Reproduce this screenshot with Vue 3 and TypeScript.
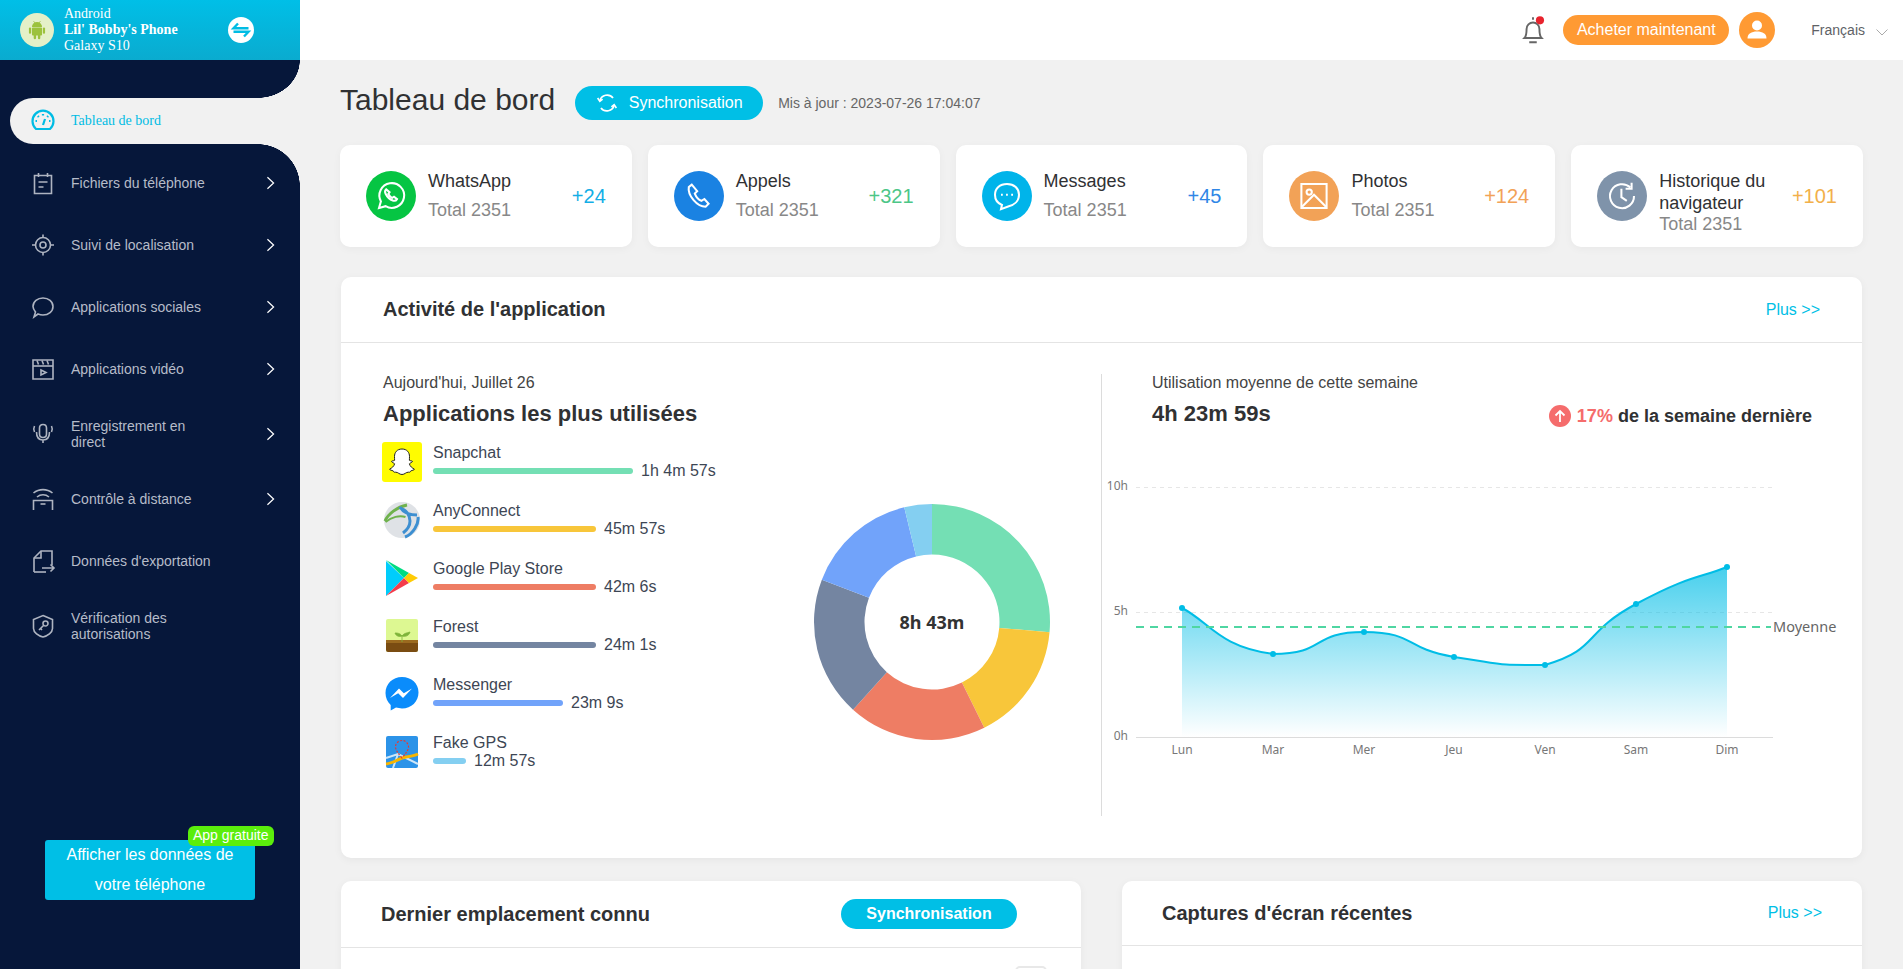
<template>
  <div class="layout">
    <aside class="sidebar">
      <div class="device">
        <span class="device-logo">
          <svg viewBox="0 0 24 24" width="22" height="22" fill="#9cc23c">
            <path d="M6.5 8.6a5.5 5.2 0 0 1 11 0z" />
            <rect x="6.5" y="9.4" width="11" height="8.6" rx="1" />
            <rect x="3.2" y="9.2" width="2.4" height="7" rx="1.2" />
            <rect x="18.4" y="9.2" width="2.4" height="7" rx="1.2" />
            <rect x="8.4" y="16" width="2.6" height="6" rx="1.3" />
            <rect x="13" y="16" width="2.6" height="6" rx="1.3" />
            <path d="M8.2 2.2l1.5 2.2M15.8 2.2l-1.5 2.2" stroke="#9cc23c" stroke-width=".8" />
          </svg>
        </span>
        <div class="device-text">
          <div>Android</div>
          <div class="device-name">Lil' Bobby's Phone</div>
          <div>Galaxy S10</div>
        </div>
        <span class="device-switch">
          <svg viewBox="0 0 26 26" width="26" height="26">
            <circle cx="13" cy="13" r="13" fill="#fff" />
            <path d="M20.5 11.2h-15L10 6.5M5.5 14.8h15L16 19.5" fill="none" stroke="#00bce4" stroke-width="2.4" />
          </svg>
        </span>
      </div>

      <nav class="menu">
        <a
          v-for="item in menu"
          :key="item.label"
          class="menu-item"
          :class="{ active: item.active, tall: item.tall }"
        >
          <span class="menu-icon">
            <svg viewBox="0 0 26 26" width="26" height="26" fill="none" stroke="currentColor" stroke-width="1.6">
              <path v-for="d in item.paths" :key="d" :d="d" />
            </svg>
          </span>
          <span class="menu-label">{{ item.label }}</span>
          <svg v-if="item.arrow" class="menu-arrow" viewBox="0 0 10 16" width="9" height="14" fill="none" stroke="#fff" stroke-width="1.4">
            <path d="M1.5 1.5L8.5 8L1.5 14.5" />
          </svg>
        </a>
      </nav>

      <div class="free-app">
        <span class="free-badge">App gratuite</span>
        Afficher les données de votre téléphone
      </div>
    </aside>

    <div class="page">
      <header class="topbar">
        <svg class="bell" viewBox="0 0 24 28" width="26" height="30" fill="none" stroke="#666" stroke-width="1.8">
          <path d="M12 4.5V2M4 21.5c2-2 2-4 2-8.5a6 6 0 0 1 12 0c0 4.500 0 6.500 2 8.500zM8.500 25.500h7" />
          <circle cx="18.500" cy="5" r="3.800" fill="#e8232d" stroke="none" />
        </svg>
        <button class="buy">Acheter maintenant</button>
        <span class="avatar">
          <svg viewBox="0 0 36 36" width="36" height="36" fill="#fff">
            <circle cx="18" cy="13.500" r="5" />
            <path d="M8.500 26.500c0-5 4-7 9.500-7s9.500 2 9.500 7z" />
          </svg>
        </span>
        <span class="lang">Français</span>
        <svg class="lang-arrow" viewBox="0 0 12 7" width="12" height="7" fill="none" stroke="#aaa" stroke-width="1">
          <path d="M.5.5L6 6l5.500-5.500" />
        </svg>
      </header>

      <main class="content">
        <div class="title-row">
          <h1>Tableau de bord</h1>
          <button class="sync">
            <svg viewBox="0 0 20 20" width="22" height="22" fill="none" stroke="#fff" stroke-width="1.500">
              <path d="M3.500 8a6.800 6.800 0 0 1 12-2.500M16.500 12a6.800 6.800 0 0 1-12 2.500" />
              <path d="M1.500 5.500L3.500 8.500L6 6.500M18.500 14.500L16.500 11.500L14 13.500" />
            </svg>
            Synchronisation
          </button>
          <span class="updated">Mis à jour : 2023-07-26 17:04:07</span>
        </div>

        <section class="stats">
          <div v-for="s in stats" :key="s.name" class="stat">
            <span class="stat-icon" :style="{ background: s.color }">
              <svg viewBox="0 0 30 30" width="36" height="36" fill="none" stroke="#fff" stroke-width="1.700">
                <path v-for="d in s.paths" :key="d" :d="d" />
              </svg>
            </span>
            <div class="stat-text">
              <div class="stat-name">{{ s.name }}</div>
              <div class="stat-total">Total 2351</div>
            </div>
            <span class="stat-count" :style="{ color: s.countColor }">{{ s.count }}</span>
          </div>
        </section>

        <section class="card activity">
          <div class="card-head">
            <h2>Activité de l'application</h2>
            <a class="more">Plus &gt;&gt;</a>
          </div>
          <div class="activity-body">
            <div class="apps-col">
              <div class="apps-list">
                <div class="sub">Aujourd'hui, Juillet 26</div>
                <h3>Applications les plus utilisées</h3>
                <div v-for="app in apps" :key="app.name" class="app-row">
                  <span class="app-icon">
                    <svg v-if="app.name === 'Snapchat'" viewBox="0 0 40 40" width="40" height="40">
                      <rect width="40" height="40" rx="3" fill="#fffc00" />
                      <path d="M20 7c5 0 7.500 3.500 7.500 7.500 0 1.500-.1 2.800-.1 3.800 1 .8 2.600.2 3 1 .3 1-2.500 1.700-3 2.500.5 2.500 3 4.500 5 5.300-.3 1.300-2.500 1.200-3.500 1.700-.7 1.300-.5 1.500-2.500 1.400-2.600-.1-3.600 2.300-6.400 2.300s-3.800-2.400-6.400-2.300c-2 .1-1.800-.1-2.500-1.400-1-.5-3.200-.4-3.500-1.700 2-.8 4.500-2.800 5-5.300-.5-.8-3.300-1.500-3-2.500.4-.8 2-.2 3-1 0-1-.1-2.300-.1-3.800C12.500 10.500 15 7 20 7z" fill="#fff" stroke="#222" stroke-width="1" />
                    </svg>
                    <svg v-else-if="app.name === 'AnyConnect'" viewBox="0 0 40 40" width="40" height="40" fill="none">
                      <circle cx="20" cy="20" r="18" fill="#dfe2e6" />
                      <path d="M3 21c3-7 12-14 22-16" stroke="#6fb24d" stroke-width="3" />
                      <path d="M3.500 22c6-5 14-7 20-5" stroke="#6fb24d" stroke-width="2" />
                      <path d="M18 7c3 5 8 8 17 8M36 17c1 7-5 17-13 20M20 9c4 1 8 6 8 12s-3 9-7 12" stroke="#3d8fd1" stroke-width="3" />
                    </svg>
                    <svg v-else-if="app.name === 'Google Play Store'" viewBox="0 0 40 40" width="40" height="40">
                      <path d="M4 3l18 17L4 38z" fill="#00cdfb" />
                      <path d="M4 2l23 13-5 5z" fill="#00dc82" />
                      <path d="M4 38l23-13-5-5z" fill="#f43c4b" />
                      <path d="M27 15l9 5-9 5-5-5z" fill="#ffcb05" />
                    </svg>
                    <svg v-else-if="app.name === 'Forest'" viewBox="0 0 40 40" width="40" height="40">
                      <rect x="4" y="3" width="32" height="33" rx="2" fill="#ddf892" />
                      <path d="M4 24h32v10a2 2 0 0 1-2 2H6a2 2 0 0 1-2-2z" fill="#7a4c12" />
                      <path d="M4 24h32v3H4z" fill="#9b6a1f" />
                      <path d="M20 26v-7M20 20c-2-3-5-3-7-3 1 3 4 4 7 3zM20 20c2-3 5-3 8-4-1 4-5 5-8 4z" fill="#7eb43a" stroke="#7eb43a" stroke-width=".8" />
                    </svg>
                    <svg v-else-if="app.name === 'Messenger'" viewBox="0 0 40 40" width="40" height="40">
                      <path d="M20 3C10.600 3 3.500 9.900 3.500 19c0 4.800 2 9 5.200 11.900v5.600l5.300-2.900c1.900.5 3.900.8 6 .8 9.400 0 16.500-6.900 16.500-16S29.400 3 20 3z" fill="#0a8cfb" />
                      <path d="M8 24l9-9.500 4.800 4.800 8.200-4.800-9 9.500-4.800-4.800z" fill="#fff" />
                    </svg>
                    <svg v-else viewBox="0 0 40 40" width="40" height="40">
                      <rect x="4" y="4" width="32" height="32" rx="2" fill="#2c93e8" />
                      <path d="M4 26l12-4 20 10M16 22l-5 14" stroke="#cfe6f7" stroke-width="2" fill="none" />
                      <path d="M4 32c8-1 13-6 20-7 5-.7 9-1.500 12-3" stroke="#f7b500" stroke-width="3" fill="none" />
                      <path d="M20 26c-4-5-6.500-8-6.500-11a6.500 6.500 0 0 1 13 0c0 3-2.500 6-6.500 11z" fill="none" stroke="#e53935" stroke-width="1.200" stroke-dasharray="2 1.500" />
                    </svg>
                  </span>
                  <div class="app-usage">
                    <div class="app-name">{{ app.name }}</div>
                    <div class="app-bar-row">
                      <span class="app-bar" :style="{ width: app.width + 'px', background: app.color }"></span>
                      <span class="app-time">{{ app.time }}</span>
                    </div>
                  </div>
                </div>
              </div>
              <div class="donut">
                <svg viewBox="-120 -120 240 240" width="240" height="240">
                  <path v-for="p in donutSlices" :key="p.color" :d="p.d" :fill="p.color" />
                </svg>
                <span class="donut-label">8h 43m</span>
              </div>
            </div>

            <div class="week-col">
              <div class="week-head">
                <div>
                  <div class="sub">Utilisation moyenne de cette semaine</div>
                  <div class="week-total">4h 23m 59s</div>
                </div>
                <div class="week-diff">
                  <svg viewBox="0 0 22 22" width="22" height="22">
                    <circle cx="11" cy="11" r="11" fill="#f56c6c" />
                    <path d="M11 17V6M6.500 10.500L11 6l4.500 4.500" fill="none" stroke="#fff" stroke-width="1.800" />
                  </svg>
                  <span><span class="pct">17%</span> de la semaine dernière</span>
                </div>
              </div>
              <svg class="chart" viewBox="1102 470 760 300" width="760" height="300">
                <defs>
                  <linearGradient id="area" x1="0" y1="0" x2="0" y2="1">
                    <stop offset="0" stop-color="#00bde6" stop-opacity=".72" />
                    <stop offset="1" stop-color="#00bde6" stop-opacity="0" />
                  </linearGradient>
                </defs>
                <g class="axis-text">
                  <text x="1128" y="490" text-anchor="end">10h</text>
                  <text x="1128" y="615" text-anchor="end">5h</text>
                  <text x="1128" y="740" text-anchor="end">0h</text>
                  <text v-for="p in points" :key="p.day" :x="p.x" y="754" text-anchor="middle">{{ p.day }}</text>
                </g>
                <path d="M1136 487.500H1773M1136 612.500H1773" stroke="#e6e6e6" stroke-dasharray="4 4" />
                <path d="M1136 737.500H1773" stroke="#dcdcdc" />
                <path :d="areaPath" fill="url(#area)" />
                <path :d="linePath" fill="none" stroke="#00bde6" stroke-width="2" />
                <circle v-for="p in points" :key="p.x" :cx="p.x" :cy="p.y" r="3" fill="#00bde6" />
                <path d="M1136 627H1771" stroke="#4fd6a2" stroke-width="2" stroke-dasharray="8 6" />
                <text x="1773" y="632" class="avg-text">Moyenne</text>
              </svg>
            </div>
          </div>
        </section>

        <section class="bottom-cards">
          <div class="card small">
            <div class="card-head small-head">
              <h2>Dernier emplacement connu</h2>
              <button class="sync-small">Synchronisation</button>
            </div>
            <div class="map-area">
              <span class="map-control"></span>
            </div>
          </div>
          <div class="card small">
            <div class="card-head small-head shots-head">
              <h2>Captures d'écran récentes</h2>
              <a class="more">Plus &gt;&gt;</a>
            </div>
          </div>
        </section>
      </main>
    </div>
  </div>
</template>

<script setup lang="ts">
import { computed } from 'vue'

interface MenuItem {
  label: string
  paths: string[]
  arrow?: boolean
  active?: boolean
  tall?: boolean
}

const menu: MenuItem[] = [
  {
    label: 'Tableau de bord',
    active: true,
    paths: ['M6 21a10.500 10.500 0 1 1 14 0z', 'M13 17l2-6', 'M13 6v1.500M5.500 13H7M20.500 13H19M7.800 8l1 1M18.200 8l-1 1']
  },
  {
    label: 'Fichiers du téléphone',
    arrow: true,
    paths: ['M4.500 5.500h17v18h-17z', 'M8.500 3v4M17.500 3v4', 'M8.500 12h9M8.500 17h5']
  },
  {
    label: 'Suivi de localisation',
    arrow: true,
    paths: ['M13 5.500a7.500 7.500 0 1 1 0 15 7.500 7.500 0 0 1 0-15z', 'M13 10a3 3 0 1 1 0 6 3 3 0 0 1 0-6z', 'M13 2.500v3M13 20.500v3M2 13h3M21 13h3']
  },
  {
    label: 'Applications sociales',
    arrow: true,
    paths: ['M4 23l1.500-5C4 16 3 14.500 3 12.500 3 7.500 7.500 4 13 4s10 3.500 10 8.500S18.500 21 13 21c-1.800 0-3.500-.4-5-1z']
  },
  {
    label: 'Applications vidéo',
    arrow: true,
    paths: ['M3 4h20v19H3z', 'M3 10h20', 'M7 4.500l1.500 4M12 4.500l1.500 4M17 4.500l1.500 4', 'M11 14l5 2.500-5 2.500z']
  },
  {
    label: 'Enregistrement en direct',
    arrow: true,
    tall: true,
    paths: ['M13 3.500c2.500 0 3.500 1.500 3.500 3.500v6c0 2-1 3.500-3.500 3.500S9.500 15 9.500 13V7c0-2 1-3.500 3.500-3.500z', 'M6.500 11c0 6 3 8 6.500 8s6.500-2 6.500-8M13 19v3', 'M4.500 5C3.500 7 3.500 9 4.500 11M21.500 5c1 2 1 4 0 6']
  },
  {
    label: 'Contrôle à distance',
    arrow: true,
    paths: ['M3.500 7C9 2.500 17 2.500 22.500 7', 'M7 11c3.500-3 8.500-3 12 0', 'M3.500 24v-9.500h19V24', 'M10.500 18h5']
  },
  {
    label: "Données d'exportation",
    paths: ['M4 24V10l7-7h11v14', 'M4 10h7V3', 'M4 24h12', 'M12 20h12M20.500 16.500L24 20l-3.500 3.500']
  },
  {
    label: 'Vérification des autorisations',
    tall: true,
    paths: ['M13 2.500l9.500 4v9c0 4-5 7.500-9.500 8.500-4.500-1-9.500-4.500-9.500-8.500v-9z', 'M9 17l5-5', 'M15.500 8a2.500 2.500 0 1 1 0 5 2.500 2.500 0 0 1 0-5z', 'M10.500 15.500l1.500 1.500']
  }
]

const stats = [
  {
    name: 'WhatsApp',
    count: '+24',
    color: '#06c543',
    countColor: '#14aee6',
    paths: ['M5 25l1.600-5.500A10.300 10.300 0 1 1 10.500 23.500z', 'M11 9.500c-1 .8-1.200 2.200-.5 3.600 1.300 2.600 3.500 4.800 6 5.700 1.500.5 2.800 0 3.500-1.200l-2.500-2-1.400 1c-1.500-.7-2.700-2-3.300-3.300l1-1.400z']
  },
  {
    name: 'Appels',
    count: '+321',
    color: '#1a82e2',
    countColor: '#4cc687',
    paths: ['M9 5.500L6.500 7.500c-.5 3 1 7.500 4 11s7 5.500 10 5.500l2.500-2.500-3.500-4-2.500 1.500c-2-.7-4.500-3.500-5.500-6l2-2z']
  },
  {
    name: 'Messages',
    count: '+45',
    color: '#00b4ea',
    countColor: '#2f86e6',
    paths: ['M15 5c6 0 10 3.800 10 9s-4 8.500-8.500 9.500L10 26l.8-3.500C7 21 5 18 5 14c0-5.200 4-9 10-9z', 'M10 14h1.500M14.200 14h1.500M18.500 14H20']
  },
  {
    name: 'Photos',
    count: '+124',
    color: '#f2a257',
    countColor: '#f2a257',
    paths: ['M4.500 5h21v20h-21z', 'M11 9.500a2.200 2.200 0 1 1 0 4.400 2.200 2.200 0 0 1 0-4.400z', 'M5 24l10-10 10 10']
  },
  {
    name: 'Historique du navigateur',
    count: '+101',
    color: '#7f93aa',
    countColor: '#f2b04a',
    paths: ['M25 15a10 10 0 1 1-3-7', 'M23 4v5h-5', 'M14.500 9v7l4.500 3']
  }
]

const apps = [
  { name: 'Snapchat', width: 200, color: '#74dfb4', time: '1h 4m 57s' },
  { name: 'AnyConnect', width: 163, color: '#f8c63a', time: '45m 57s' },
  { name: 'Google Play Store', width: 163, color: '#ee7d64', time: '42m 6s' },
  { name: 'Forest', width: 163, color: '#7485a1', time: '24m 1s' },
  { name: 'Messenger', width: 130, color: '#71a3fa', time: '23m 9s' },
  { name: 'Fake GPS', width: 33, color: '#84cff1', time: '12m 57s' }
]

// angles in degrees, clockwise from the top of the ring
const donutParts = [
  { to: 95, color: '#74dfb4' },
  { to: 153.700, color: '#f8c63a' },
  { to: 222, color: '#ee7d64' },
  { to: 291, color: '#7485a1' },
  { to: 346.400, color: '#71a3fa' },
  { to: 360, color: '#84cff1' }
]

function polar(r: number, deg: number): string {
  const a = (deg * Math.PI) / 180
  return `${(r * Math.sin(a)).toFixed(2)} ${(-r * Math.cos(a)).toFixed(2)}`
}

const donutSlices = computed(() => {
  let from = 0
  return donutParts.map((part) => {
    const large = part.to - from > 180 ? 1 : 0
    const d = `M${polar(118, from)}A118 118 0 ${large} 1 ${polar(118, part.to)}L${polar(67.500, part.to)}A67.500 67.500 0 ${large} 0 ${polar(67.500, from)}Z`
    from = part.to
    return { d, color: part.color }
  })
})

const points = [
  { day: 'Lun', x: 1182, y: 608 },
  { day: 'Mar', x: 1273, y: 654 },
  { day: 'Mer', x: 1364, y: 632 },
  { day: 'Jeu', x: 1454, y: 657 },
  { day: 'Ven', x: 1545, y: 665 },
  { day: 'Sam', x: 1636, y: 604 },
  { day: 'Dim', x: 1727, y: 567 }
]

function clamp(v: number, a: number, b: number): number {
  return Math.min(Math.max(v, Math.min(a, b)), Math.max(a, b))
}

// smooth line, control points stay inside each segment's y range
const linePath = computed(() => {
  const s = 0.3
  let d = `M${points[0].x} ${points[0].y}`
  for (let i = 0; i < points.length - 1; i++) {
    const p0 = points[Math.max(i - 1, 0)]
    const p1 = points[i]
    const p2 = points[i + 1]
    const p3 = points[Math.min(i + 2, points.length - 1)]
    const c1x = p1.x + (p2.x - p0.x) * s
    const c1y = clamp(p1.y + (p2.y - p0.y) * s, p1.y, p2.y)
    const c2x = p2.x - (p3.x - p1.x) * s
    const c2y = clamp(p2.y - (p3.y - p1.y) * s, p1.y, p2.y)
    d += `C${c1x} ${c1y} ${c2x} ${c2y} ${p2.x} ${p2.y}`
  }
  return d
})

const areaPath = computed(() => `${linePath.value}V737H1182Z`)
</script>

<style scoped>
.layout {
  display: flex;
  height: 100vh;
  overflow: hidden;
  background: #f1f1f1;
  font-family: "Liberation Sans", Arial, sans-serif;
  color: #333;
}

.sidebar {
  width: 300px;
  flex: none;
  display: flex;
  flex-direction: column;
  background: #06173a;
}

.device {
  height: 60px;
  flex: none;
  display: flex;
  align-items: center;
  padding-left: 20px;
  background: linear-gradient(180deg, #00bfe7, #0aabcf);
  color: #fff;
  font-family: "Liberation Serif", serif;
  font-size: 14px;
  line-height: 16px;
}

.device-logo {
  width: 34px;
  height: 34px;
  border-radius: 50%;
  background: #e4f0c8;
  display: flex;
  align-items: center;
  justify-content: center;
  margin-right: 10px;
}

.device-text {
  width: 164px;
}

.device-name {
  font-weight: bold;
}

.device-switch {
  display: flex;
}

.menu {
  padding-top: 38px;
  display: flex;
  flex-direction: column;
  gap: 16px;
}

.menu-item {
  position: relative;
  display: flex;
  align-items: center;
  min-height: 46px;
  color: #b6bcc9;
  font-size: 14px;
  line-height: 16px;
}

.menu-item.tall {
  min-height: 52px;
}

.menu-item.active {
  margin-left: 10px;
  background: #f1f1f1;
  border-radius: 23px 0 0 23px;
  color: #00bce4;
  font-family: "Liberation Serif", serif;
}

.menu-item.active::before,
.menu-item.active::after {
  content: "";
  position: absolute;
  right: 0;
  width: 42px;
}

.menu-item.active::before {
  top: -38px;
  height: 38px;
  background: radial-gradient(ellipse 42px 38px at 0 0, #06173a 99%, #f1f1f1 100%);
}

.menu-item.active::after {
  bottom: -42px;
  height: 42px;
  background: radial-gradient(circle 42px at 0 100%, #06173a 99%, #f1f1f1 100%);
}

.menu-icon {
  width: 26px;
  height: 26px;
  margin-left: 30px;
  margin-right: 15px;
  flex: none;
  color: #aeb4c1;
}

.menu-item.active .menu-icon {
  margin-left: 20px;
  color: #00bce4;
}

.menu-item.active .menu-icon svg {
  stroke-width: 2.2;
}

.menu-label {
  width: 150px;
  flex: none;
}

.menu-item:not(.tall) .menu-label {
  width: auto;
}

.menu-arrow {
  position: absolute;
  left: 266px;
}

.free-app {
  position: relative;
  margin: auto 45px 69px;
  height: 60px;
  padding: 0 20px;
  background: #00bfe6;
  border-radius: 3px;
  color: #fff;
  font-size: 16px;
  line-height: 30px;
  text-align: center;
}

.free-badge {
  position: absolute;
  left: 143px;
  top: -14px;
  height: 20px;
  padding: 0 5px;
  border-radius: 6px;
  background: #5bee0c;
  font-size: 14px;
  line-height: 18px;
  white-space: nowrap;
}

.page {
  flex: 1;
  min-width: 0;
  display: flex;
  flex-direction: column;
}

.topbar {
  height: 60px;
  flex: none;
  display: flex;
  align-items: center;
  padding-right: 15px;
  background: #fff;
}

.bell {
  margin-left: auto;
  margin-right: 17px;
}

.buy {
  height: 30px;
  width: 166px;
  padding: 0;
  border: none;
  border-radius: 15px;
  background: #ff9a33;
  color: #fff;
  font-family: inherit;
  font-size: 16px;
}

.avatar {
  width: 36px;
  height: 36px;
  margin: 0 36px 0 10px;
  border-radius: 50%;
  background: #ff9a33;
}

.lang {
  font-size: 14px;
  color: #606266;
}

.lang-arrow {
  margin: 4px 0 0 11px;
}

.content {
  flex: 1;
  min-height: 0;
  padding: 26px 40px 0;
}

.title-row {
  display: flex;
  align-items: center;
  height: 34px;
}

h1 {
  margin: 0 20px 0 0;
  padding-bottom: 7px;
  font-size: 30px;
  font-weight: normal;
  color: #303133;
  white-space: nowrap;
}

.sync {
  display: flex;
  align-items: center;
  justify-content: center;
  gap: 11px;
  width: 188px;
  height: 34px;
  padding: 0;
  border: none;
  border-radius: 17px;
  background: #00bfe6;
  color: #fff;
  font-family: inherit;
  font-size: 16px;
}

.updated {
  margin-left: 15px;
  font-size: 14px;
  color: #666;
}

.stats {
  display: grid;
  grid-template-columns: repeat(5, 1fr);
  gap: 16px;
  margin-top: 25px;
}

.stat {
  height: 102px;
  display: flex;
  align-items: center;
  padding: 0 26px;
  background: #fff;
  border-radius: 10px;
  box-shadow: 0 2px 8px rgba(0, 0, 0, 0.04);
}

.stat-icon {
  width: 50px;
  height: 50px;
  flex: none;
  display: flex;
  align-items: center;
  justify-content: center;
  border-radius: 50%;
  margin-right: 12px;
}

.stat-text {
  flex: 1;
  min-width: 0;
  height: 50px;
  display: flex;
  flex-direction: column;
  justify-content: space-between;
  margin-top: -3px;
  font-size: 18px;
}

.stat-name {
  line-height: 22px;
  color: #303133;
  flex: none;
}

.stat-total {
  line-height: 20px;
  color: #888;
  flex: none;
}

.stat-count {
  font-size: 20px;
  margin-left: 8px;
}

.card {
  background: #fff;
  border-radius: 10px;
  box-shadow: 0 2px 8px rgba(0, 0, 0, 0.05);
}

.activity {
  margin: 30px 1px 0;
  height: 581px;
}

.card-head {
  height: 65px;
  display: flex;
  align-items: center;
  justify-content: space-between;
  padding: 0 42px;
  border-bottom: 1px solid #e4e4e4;
}

h2 {
  margin: 0;
  font-size: 20px;
  color: #303133;
}

.more {
  font-size: 16px;
  color: #00bfe6;
}

.activity-body {
  display: flex;
  padding: 31px 0 42px 42px;
}

.apps-col {
  width: 718px;
  flex: none;
  display: flex;
}

.apps-list {
  width: 429px;
  flex: none;
}

.sub {
  font-size: 16px;
  line-height: 18px;
  color: #444;
}

h3 {
  margin: 9px 0 15px;
  font-size: 22px;
  line-height: 26px;
  color: #303133;
}

.app-row {
  display: flex;
  height: 58px;
  color: #3d4654;
  font-size: 16px;
}

.app-icon {
  width: 40px;
  height: 40px;
  flex: none;
  margin: 0 11px 0 -1px;
}

.app-name {
  padding-top: 2px;
  line-height: 18px;
}

.app-bar-row {
  display: flex;
  align-items: center;
  height: 18px;
}

.app-bar {
  height: 6px;
  border-radius: 3px;
  margin-right: 8px;
}

.donut {
  position: relative;
  width: 240px;
  height: 240px;
  margin-top: 128px;
  flex: none;
}

.donut svg {
  display: block;
}

.donut-label {
  position: absolute;
  inset: 0;
  display: flex;
  align-items: center;
  justify-content: center;
  font-family: "Noto Sans", sans-serif;
  font-size: 18px;
  font-weight: 700;
  color: #333;
}

.week-col {
  flex: 1;
  min-width: 0;
  height: 442px;
  border-left: 1px solid #dcdcdc;
}

.week-head {
  display: flex;
  justify-content: space-between;
  padding: 0 50px;
}

.week-total {
  margin-top: 9px;
  font-size: 22px;
  line-height: 26px;
  font-weight: bold;
  color: #303133;
}

.week-diff {
  display: flex;
  align-items: center;
  align-self: flex-end;
  gap: 6px;
  font-size: 18px;
  font-weight: bold;
  color: #303133;
  white-space: nowrap;
}

.pct {
  color: #f56c6c;
}

.chart {
  display: block;
  margin-top: 43px;
}

.axis-text text {
  font-family: "Noto Sans", sans-serif;
  font-size: 12px;
  fill: #777;
}

.avg-text {
  font-family: "Noto Sans", sans-serif;
  font-size: 14.500px;
  fill: #666;
}

.bottom-cards {
  display: grid;
  grid-template-columns: 740px 740px;
  justify-content: space-between;
  margin: 23px 1px 0;
}

.small {
  height: 200px;
}

.small-head {
  height: 66px;
  padding: 0 64px 0 40px;
}

.shots-head {
  height: 64px;
  padding-right: 40px;
}

.small-head h2 {
  font-size: 20px;
}

.sync-small {
  width: 176px;
  height: 30px;
  padding: 0;
  border: none;
  border-radius: 15px;
  background: #00bfe6;
  color: #fff;
  font-family: inherit;
  font-size: 16px;
  font-weight: bold;
}

.map-area {
  display: flex;
  justify-content: flex-end;
  padding: 18px 34px 0 0;
}

.map-control {
  width: 32px;
  height: 40px;
  box-sizing: border-box;
  border: 2px solid #e8e8e8;
  border-radius: 5px;
}
</style>
